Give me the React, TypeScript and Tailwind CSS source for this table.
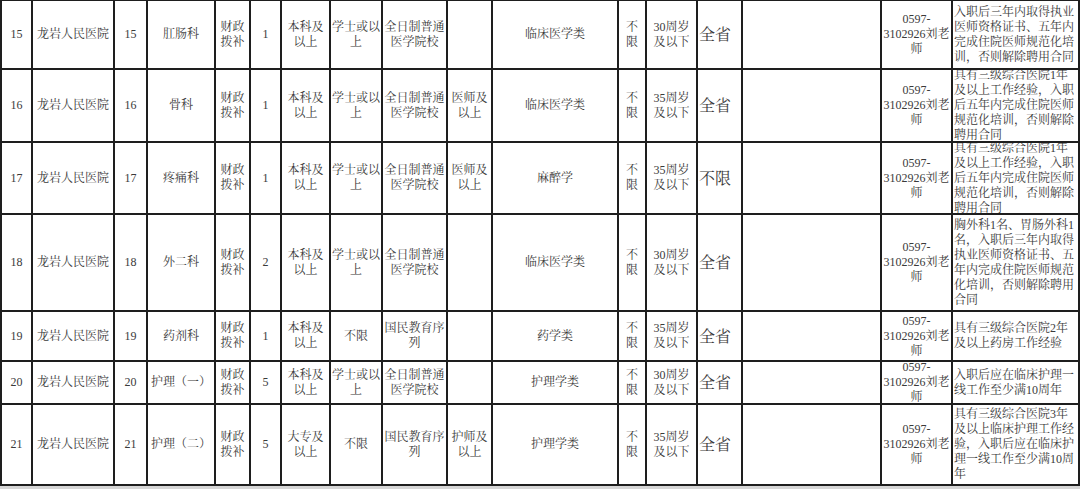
import React from "react";

type Row = {
  h: string;
  id: string;
  dept: string;
  n: string;
  edu: string;
  degree: string;
  school: string;
  title: string;
  major: string;
  age: string;
  region: string;
  remark: string;
};

const BK = "本科及\n以上";
const XS = "学士或以\n上";
const QR = "全日制普通\n医学院校";
const GM = "国民教育序\n列";

const rows: Row[] = [
  {
    h: "h-[69px]",
    id: "15",
    dept: "肛肠科",
    n: "1",
    edu: BK,
    degree: XS,
    school: QR,
    title: "",
    major: "临床医学类",
    age: "30周岁\n及以下",
    region: "全省",
    remark: "入职后三年内取得执业\n医师资格证书、五年内\n完成住院医师规范化培\n训，否则解除聘用合同",
  },
  {
    h: "h-[73px]",
    id: "16",
    dept: "骨科",
    n: "1",
    edu: BK,
    degree: XS,
    school: QR,
    title: "医师及\n以上",
    major: "临床医学类",
    age: "35周岁\n及以下",
    region: "全省",
    remark: "具有三级综合医院1年\n及以上工作经验，入职\n后五年内完成住院医师\n规范化培训，否则解除\n聘用合同",
  },
  {
    h: "h-[72px]",
    id: "17",
    dept: "疼痛科",
    n: "1",
    edu: BK,
    degree: XS,
    school: QR,
    title: "医师及\n以上",
    major: "麻醉学",
    age: "35周岁\n及以下",
    region: "不限",
    remark: "具有三级综合医院1年\n及以上工作经验，入职\n后五年内完成住院医师\n规范化培训，否则解除\n聘用合同",
  },
  {
    h: "h-[97px]",
    id: "18",
    dept: "外二科",
    n: "2",
    edu: BK,
    degree: XS,
    school: QR,
    title: "",
    major: "临床医学类",
    age: "30周岁\n及以下",
    region: "全省",
    remark: "胸外科1名、胃肠外科1\n名，入职后三年内取得\n执业医师资格证书、五\n年内完成住院医师规范\n化培训，否则解除聘用\n合同",
  },
  {
    h: "h-[50px]",
    id: "19",
    dept: "药剂科",
    n: "1",
    edu: BK,
    degree: "不限",
    school: GM,
    title: "",
    major: "药学类",
    age: "35周岁\n及以下",
    region: "全省",
    remark: "具有三级综合医院2年\n及以上药房工作经验",
  },
  {
    h: "h-[43px]",
    id: "20",
    dept: "护理（一）",
    n: "5",
    edu: BK,
    degree: XS,
    school: QR,
    title: "",
    major: "护理学类",
    age: "30周岁\n及以下",
    region: "全省",
    remark: "入职后应在临床护理一\n线工作至少满10周年",
  },
  {
    h: "h-[81px]",
    id: "21",
    dept: "护理（二）",
    n: "5",
    edu: "大专及\n以上",
    degree: "不限",
    school: GM,
    title: "护师及\n以上",
    major: "护理学类",
    age: "35周岁\n及以下",
    region: "全省",
    remark: "具有三级综合医院3年\n及以上临床护理工作经\n验，入职后应在临床护\n理一线工作至少满10周\n年",
  },
];

const base =
  "flex items-center justify-center text-center whitespace-pre overflow-hidden border-r-2 border-b-2 border-[#1e1e1e] leading-[15px]";

function C({ children, className = "" }: { children?: React.ReactNode; className?: string }) {
  return <div className={base + " " + className}>{children}</div>;
}

export default function App() {
  return (
    <div
      className="w-[1080px] h-[489px] bg-white text-[12px] text-[#3a3a3a] overflow-hidden"
      style={{ fontFamily: '"Liberation Serif", "Noto Serif CJK SC", "Noto Sans CJK SC", serif' }}
    >
      <div className="grid grid-cols-[31px_82px_33px_68px_35px_31px_49px_52px_65px_45px_126px_28px_51px_45px_139px_71px_127px] border-l-2 border-t border-[#1e1e1e]">
        {rows.map((r) => (
          <React.Fragment key={r.id}>
            <C className={r.h}>{r.id}</C>
            <C className={r.h}>龙岩人民医院</C>
            <C className={r.h}>{r.id}</C>
            <C className={r.h}>{r.dept}</C>
            <C className={r.h}>{"财政\n拨补"}</C>
            <C className={r.h}>{r.n}</C>
            <C className={r.h}>{r.edu}</C>
            <C className={r.h}>{r.degree}</C>
            <C className={r.h}>{r.school}</C>
            <C className={r.h}>{r.title}</C>
            <C className={r.h}>{r.major}</C>
            <C className={r.h}>{"不\n限"}</C>
            <C className={r.h}>{r.age}</C>
            <C className={r.h + " !justify-start pl-[1px] text-[16px]"}>{r.region}</C>
            <C className={r.h}></C>
            <C className={r.h}>{"0597-\n3102926刘老\n师"}</C>
            <C className={r.h + " !justify-start !text-left pl-[1px] [align-items:safe_center] border-r-0"}>
              {r.remark}
            </C>
          </React.Fragment>
        ))}
      </div>
      <div className="h-[3px] bg-[#d6d6d6]" />
    </div>
  );
}
